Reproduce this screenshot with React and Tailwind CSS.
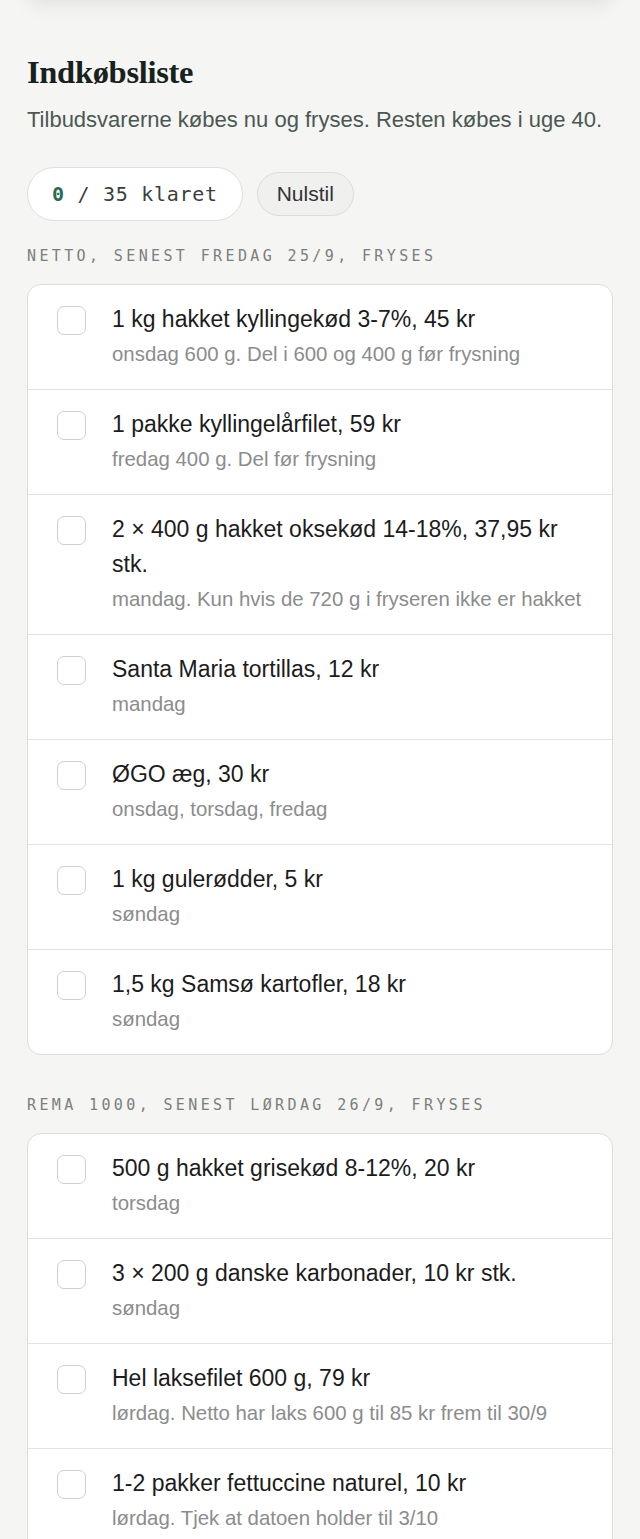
import { useState } from 'react';

const sections = [
  {
    title: 'Netto, senest fredag 25/9, fryses',
    items: [
      { name: '1 kg hakket kyllingekød 3-7%, 45 kr', note: 'onsdag 600 g. Del i 600 og 400 g før frysning' },
      { name: '1 pakke kyllingelårfilet, 59 kr', note: 'fredag 400 g. Del før frysning' },
      { name: '2 × 400 g hakket oksekød 14-18%, 37,95 kr stk.', note: 'mandag. Kun hvis de 720 g i fryseren ikke er hakket' },
      { name: 'Santa Maria tortillas, 12 kr', note: 'mandag' },
      { name: 'ØGO æg, 30 kr', note: 'onsdag, torsdag, fredag' },
      { name: '1 kg gulerødder, 5 kr', note: 'søndag' },
      { name: '1,5 kg Samsø kartofler, 18 kr', note: 'søndag' },
    ],
  },
  {
    title: 'Rema 1000, senest lørdag 26/9, fryses',
    items: [
      { name: '500 g hakket grisekød 8-12%, 20 kr', note: 'torsdag' },
      { name: '3 × 200 g danske karbonader, 10 kr stk.', note: 'søndag' },
      { name: 'Hel laksefilet 600 g, 79 kr', note: 'lørdag. Netto har laks 600 g til 85 kr frem til 30/9' },
      { name: '1-2 pakker fettuccine naturel, 10 kr', note: 'lørdag. Tjek at datoen holder til 3/10' },
      { name: 'Frisk basilikum, 15 kr', note: 'lørdag' },
    ],
  },
];

function Row({ item, checked, onToggle }) {
  return (
    <li className="flex items-start gap-[26px] pl-[29px] pr-[20px] pt-[17px] pb-[21px] border-t border-[#e2e2df] first:border-t-0">
      <button
        onClick={onToggle}
        className={`mt-[4px] w-[29px] h-[29px] shrink-0 rounded-[7px] border ${checked ? 'bg-[#2a6b55] border-[#2a6b55]' : 'bg-white border-[#cfcfcc]'}`}
      />
      <div className="min-w-0">
        <p className={`text-[23px] leading-[35px] ${checked ? 'text-[#9a9a9a] line-through' : 'text-[#1c1c1c]'}`}>{item.name}</p>
        <p className="mt-[3px] text-[20.4px] leading-[28px] text-[#8a8d8b]">{item.note}</p>
      </div>
    </li>
  );
}

export default function App() {
  const [done, setDone] = useState({});
  const count = Object.values(done).filter(Boolean).length;

  return (
    <div className="min-h-screen bg-[#f5f5f3] overflow-hidden font-['Liberation_Sans',Arial,sans-serif]">
      {/* bottom edge of the card above */}
      <div className="-mt-[40px] h-[40px] mx-[24px] rounded-b-2xl bg-[#f5f5f3] shadow-[0_6px_18px_rgba(0,0,0,0.07)]" />

      <div className="px-[27px] pt-[54px] pb-10">
        <h1 className="font-['Liberation_Serif',serif] font-bold text-[32.5px] leading-[36px] text-[#17221d] tracking-[-0.3px]">
          Indkøbsliste
        </h1>
        <p className="mt-4 text-[22px] leading-[28px] text-[#4b5852]">
          Tilbudsvarerne købes nu og fryses. Resten købes i uge 40.
        </p>

        <div className="mt-[33px] flex items-center gap-[14px]">
          <div className="h-[54px] px-[24px] flex items-center rounded-full bg-white border border-[#dededa] font-['DejaVu_Sans_Mono',monospace] text-[20px] tracking-[0.7px] text-[#3a3f3c]">
            <span className="font-bold text-[#2a6b55]">{count}</span>
            <span>&nbsp;/ 35 klaret</span>
          </div>
          <button
            onClick={() => setDone({})}
            className="h-[44px] px-[19px] rounded-full bg-[#f0f0ee] border border-[#dcdcd8] text-[21px] text-[#333]"
          >
            Nulstil
          </button>
        </div>

        {sections.map((section, si) => (
          <section key={si} className={si === 0 ? 'mt-[25px]' : 'mt-[40px]'}>
            <h2 className="font-['DejaVu_Sans_Mono',monospace] uppercase text-[15px] leading-[20px] tracking-[0.225em] text-[#7b7f7c]">
              {section.title}
            </h2>
            <ul className="mt-[18px] bg-white border border-[#dcdcd8] rounded-[14px] overflow-hidden">
              {section.items.map((item, ii) => {
                const key = `${si}-${ii}`;
                return (
                  <Row
                    key={key}
                    item={item}
                    checked={!!done[key]}
                    onToggle={() => setDone((d) => ({ ...d, [key]: !d[key] }))}
                  />
                );
              })}
            </ul>
          </section>
        ))}
      </div>
    </div>
  );
}
